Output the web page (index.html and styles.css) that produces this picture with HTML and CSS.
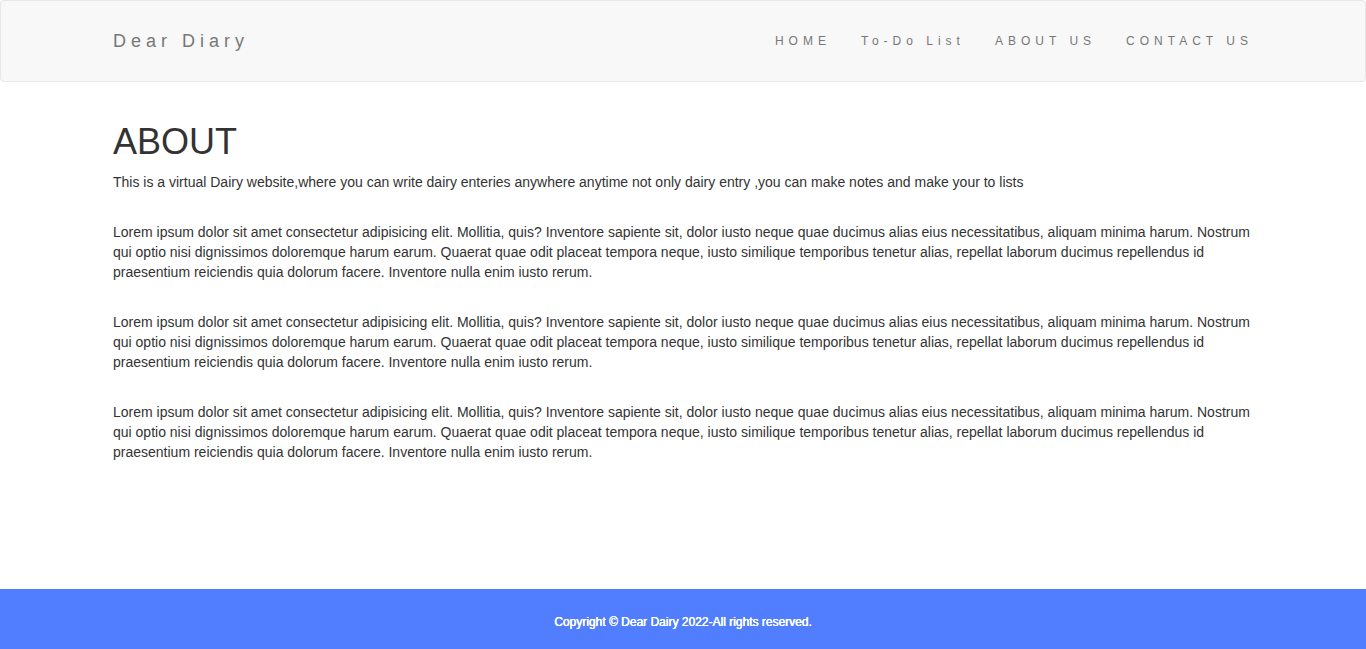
FILE: index.html
```html
<!DOCTYPE html>
<html lang="en">
<head>
<meta charset="utf-8">
<title>Dear Diary - About</title>
<link rel="stylesheet" href="styles.css">
</head>
<body>
<nav class="navbar">
  <div class="container nav-inner">
    <a class="brand" href="#">Dear Diary</a>
    <ul class="nav-links">
      <li><a href="#">HOME</a></li>
      <li><a href="#">To-Do List</a></li>
      <li><a href="#">ABOUT US</a></li>
      <li><a href="#">CONTACT US</a></li>
    </ul>
  </div>
</nav>
<main class="container content">
  <h1 class="title">ABOUT</h1>
  <p class="lead">This is a virtual Dairy website,where you can write dairy enteries anywhere anytime not only dairy entry ,you can make notes and make your to lists</p>
  <p>Lorem ipsum dolor sit amet consectetur adipisicing elit. Mollitia, quis? Inventore sapiente sit, dolor iusto neque quae ducimus alias eius necessitatibus, aliquam minima harum. Nostrum qui optio nisi dignissimos doloremque harum earum. Quaerat quae odit placeat tempora neque, iusto similique temporibus tenetur alias, repellat laborum ducimus repellendus id praesentium reiciendis quia dolorum facere. Inventore nulla enim iusto rerum.</p>
  <p>Lorem ipsum dolor sit amet consectetur adipisicing elit. Mollitia, quis? Inventore sapiente sit, dolor iusto neque quae ducimus alias eius necessitatibus, aliquam minima harum. Nostrum qui optio nisi dignissimos doloremque harum earum. Quaerat quae odit placeat tempora neque, iusto similique temporibus tenetur alias, repellat laborum ducimus repellendus id praesentium reiciendis quia dolorum facere. Inventore nulla enim iusto rerum.</p>
  <p>Lorem ipsum dolor sit amet consectetur adipisicing elit. Mollitia, quis? Inventore sapiente sit, dolor iusto neque quae ducimus alias eius necessitatibus, aliquam minima harum. Nostrum qui optio nisi dignissimos doloremque harum earum. Quaerat quae odit placeat tempora neque, iusto similique temporibus tenetur alias, repellat laborum ducimus repellendus id praesentium reiciendis quia dolorum facere. Inventore nulla enim iusto rerum.</p>
</main>
<footer class="footer">
  <p>Copyright © Dear Dairy 2022-All rights reserved.</p>
</footer>
</body>
</html>
```

FILE: styles.css
```css
* { box-sizing: border-box; }
html, body { margin: 0; padding: 0; }
body {
  font-family: "Liberation Sans", Arial, sans-serif;
  font-size: 14px;
  line-height: 20px;
  color: #333;
  background: #fff;
  min-height: 100vh;
  display: flex;
  flex-direction: column;
}
.container {
  width: 1170px;
  margin: 0 auto;
  padding: 0 15px;
}
.navbar {
  background: #f8f8f8;
  border: 1px solid #e7e7e7;
  border-radius: 4px;
  height: 82px;
}
.nav-inner {
  height: 80px;
  display: flex;
  align-items: center;
  justify-content: space-between;
}
.brand {
  color: #777;
  text-decoration: none;
  font-size: 18px;
  letter-spacing: 5px;
  line-height: 20px;
}
.nav-links {
  list-style: none;
  margin: 0 -15px 0 0;
  padding: 0;
  display: flex;
}
.nav-links a {
  display: block;
  padding: 10px 15px;
  color: #777;
  text-decoration: none;
  font-size: 12px;
  letter-spacing: 5px;
  line-height: 20px;
}
.content {
  padding-top: 20px;
  padding-bottom: 40px;
}
.title {
  font-size: 36px;
  font-weight: 500;
  line-height: 1.1;
  margin: 20px 0 10px;
  color: #333;
}
.content p {
  margin: 0 0 30px;
}
.footer {
  margin-top: auto;
  background: #507efe;
  height: 60px;
  display: flex;
  align-items: center;
  justify-content: center;
}
.footer p {
  margin: 5px 0 0;
  color: #fff;
  font-size: 12px;
  font-weight: normal;
  text-shadow: 0 0 0.6px #fff, 0.3px 0 0 #fff;
}
```
